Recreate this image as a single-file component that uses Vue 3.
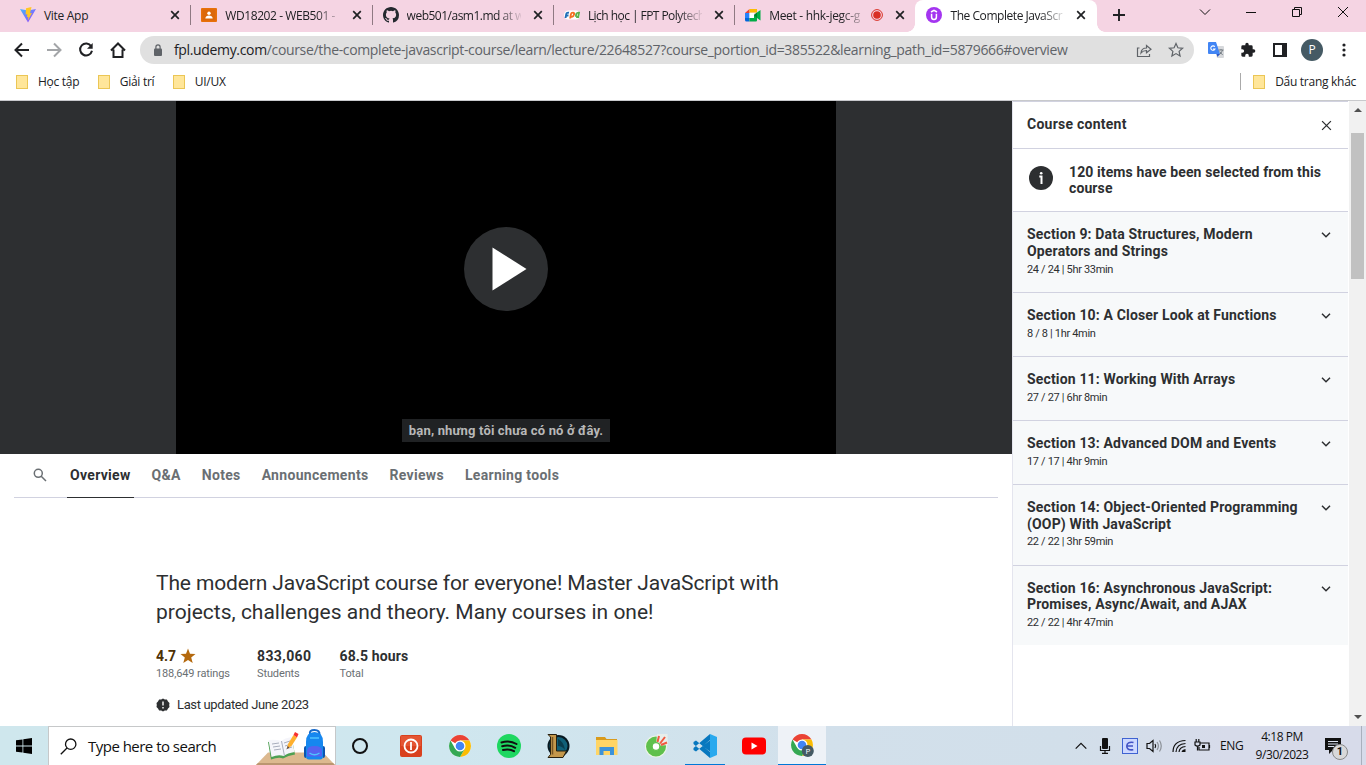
<script setup>
const tabs = [
  { id: 'vite', title: 'Vite App' },
  { id: 'classroom', title: 'WD18202 - WEB501 -' },
  { id: 'github', title: 'web501/asm1.md at w' },
  { id: 'fpt', title: 'Lịch học | FPT Polytech' },
  { id: 'meet', title: 'Meet - hhk-jegc-g', recording: true },
  { id: 'udemy', title: 'The Complete JavaScr', active: true },
]
const bookmarks = ['Học tập', 'Giải trí', 'UI/UX']
const courseTabs = ['Overview', 'Q&A', 'Notes', 'Announcements', 'Reviews', 'Learning tools']
const sections = [
  { lines: ['Section 9: Data Structures, Modern', 'Operators and Strings'], meta: '24 / 24 | 5hr 33min' },
  { lines: ['Section 10: A Closer Look at Functions'], meta: '8 / 8 | 1hr 4min' },
  { lines: ['Section 11: Working With Arrays'], meta: '27 / 27 | 6hr 8min' },
  { lines: ['Section 13: Advanced DOM and Events'], meta: '17 / 17 | 4hr 9min' },
  { lines: ['Section 14: Object-Oriented Programming', '(OOP) With JavaScript'], meta: '22 / 22 | 3hr 59min' },
  { lines: ['Section 16: Asynchronous JavaScript:', 'Promises, Async/Await, and AJAX'], meta: '22 / 22 | 4hr 47min' },
]
const apps = ['power', 'chrome', 'spotify', 'lol', 'explorer', 'coccoc', 'vscode', 'youtube', 'chromep']
</script>

<template>
  <div class="screen">
    <header class="tabstrip">
      <div v-for="t in tabs" :key="t.id" class="tab" :class="[t.id, { active: t.active }]">
        <svg class="fav" viewBox="0 0 16 16">
          <g v-if="t.id === 'vite'">
            <defs>
              <linearGradient id="vg" x1="0" y1="0" x2="1" y2="1"><stop offset="0" stop-color="#41b8ff" /><stop offset="1" stop-color="#a43cff" /></linearGradient>
            </defs>
            <path d="M0 2 8 15.500 16 2 8 3.500z" fill="url(#vg)" />
            <path d="M11.500 0 6 1.200 5.600 7.500l1.800-.3-.5 3 1.500-.4-.7 4L12 5.900l-2 .3z" fill="#ffc823" />
          </g>
          <g v-else-if="t.id === 'classroom'">
            <rect y="1" width="16" height="14" rx="1" fill="#e8710a" />
            <rect x="1.500" y="2.500" width="13" height="11" fill="#dc680a" />
            <circle cx="8" cy="6.300" r="1.700" fill="#fff" /><path d="M4.300 11.500c0-4 7.400-4 7.400 0z" fill="#fff" />
          </g>
          <path v-else-if="t.id === 'github'" fill="#24292f" d="M8 0C3.580 0 0 3.580 0 8c0 3.540 2.290 6.530 5.470 7.590.4.070.55-.17.55-.38 0-.19-.01-.82-.01-1.490-2.010.37-2.530-.49-2.690-.94-.09-.23-.48-.94-.82-1.130-.28-.15-.68-.52-.01-.53.63-.01 1.080.58 1.230.82.72 1.210 1.870.87 2.330.66.07-.52.28-.87.51-1.070-1.780-.2-3.640-.89-3.640-3.950 0-.87.31-1.590.82-2.150-.08-.2-.36-1.020.08-2.120 0 0 .67-.21 2.200.82a7.400 7.400 0 0 1 4 0c1.530-1.040 2.200-.82 2.200-.82.44 1.100.16 1.920.08 2.120.51.56.82 1.270.82 2.150 0 3.070-1.870 3.750-3.650 3.950.29.25.54.73.54 1.480 0 1.070-.01 1.930-.01 2.200 0 .21.15.46.55.38A8.010 8.010 0 0 0 16 8c0-4.420-3.580-8-8-8z" />
          <g v-else-if="t.id === 'fpt'">
            <rect x="0" y="3.500" width="16" height="9" rx="4.500" fill="#fff" />
            <g fill="none" stroke-width="1.900" transform="skewX(-10) translate(1 0)"><path d="M2.500 11V7q0-1.500 2.500-1.200M2 8.500h3" stroke="#1f6fb8" /><path d="M7.200 11.500V7q0-1.400 1.600-1.400t1.600 2-2.200 2.400" stroke="#f36f21" /><path d="M12.500 9.800V7q0-1.400 2.500-1.200v4.200h-2" stroke="#5bb04c" /></g>
          </g>
          <g v-else-if="t.id === 'meet'">
            <path d="M0 6 4.500 2v4z" fill="#ea4335" /><path d="M4.500 2H12v3.500H4.500z" fill="#fbbc04" /><path d="M0 6h4.500v5H0z" fill="#2684fc" /><path d="M0 11h4.500v3.500h-3Q0 14.500 0 13z" fill="#0066da" /><path d="M4.500 11H9V8l3-2.500 3.500-2.500v10.500L12 11v2.500q0 1-1 1H4.500z" fill="#00ac47" /><path d="M9 8l3-2.500V11z" fill="#00832d" /><path d="M4.500 6H9v5H4.500z" fill="#fff" />
          </g>
          <g v-else>
            <circle cx="8" cy="8" r="8" fill="#a435f0" />
            <path d="M5 5 8 3.300 11 5M5.600 6.800v3.200q0 2.500 2.400 2.500t2.400-2.500V6.800" fill="none" stroke="#fff" stroke-width="1.500" />
          </g>
        </svg>
        <span class="tab-title">{{ t.title }}</span>
        <svg v-if="t.recording" class="rec" viewBox="0 0 12 12"><circle cx="6" cy="6" r="5.400" fill="none" stroke="#d93025" /><circle cx="6" cy="6" r="3.800" fill="#d93025" /></svg>
        <svg class="close" viewBox="0 0 10 10"><path d="M1.200 1.200 8.800 8.800M8.800 1.200 1.200 8.800" stroke="#202124" stroke-width="1.700" /></svg>
      </div>
      <svg class="plus" viewBox="0 0 12 12"><path d="M6 0v12M0 6h12" stroke="#202124" stroke-width="1.900" /></svg>
      <div class="win">
        <svg viewBox="0 0 12 12"><path d="M1 3.500 6 8.500 11 3.500" /></svg>
        <svg viewBox="0 0 12 12"><path d="M1 6.500h10" /></svg>
        <svg viewBox="0 0 12 12"><path d="M1.500 3.500h7v7h-7zM3.500 3.500v-2h7v7h-2" /></svg>
        <svg viewBox="0 0 12 12"><path d="M1 1l10 10M11 1 1 11" /></svg>
      </div>
    </header>

    <div class="toolbar">
      <div class="nav">
        <svg viewBox="0 0 16 16"><path d="M15 8H2M8 1.500 1.500 8 8 14.500" stroke="#202124" /></svg>
        <svg viewBox="0 0 16 16"><path d="M1 8h13M8 1.500 14.500 8 8 14.500" stroke="#a3a5a8" /></svg>
        <svg viewBox="0 0 16 16"><path d="M13.200 4.200A6 6 0 1 0 14 8.800" stroke="#202124" /><path d="M14.700 1v5.700H9z" fill="#202124" /></svg>
        <svg viewBox="0 0 16 16"><path d="M1 8.500 8 1.500l7 7M3.500 7.500V15h9V7.500" stroke="#202124" /></svg>
      </div>
      <div class="omnibox">
        <svg class="lock" viewBox="0 0 10 12"><rect x="1" y="4.500" width="8" height="7.500" rx="1" fill="#5f6368" /><path d="M2.900 5V3a2.100 2.100 0 0 1 4.200 0v2" fill="none" stroke="#5f6368" stroke-width="1.200" /></svg>
        <span class="url"><b>fpl.udemy.com</b>/course/the-complete-javascript-course/learn/lecture/22648527?course_portion_id=385522&amp;learning_path_id=5879666#overview</span>
        <svg class="oi share" viewBox="0 0 16 16"><path d="M3.500 6H1.500v8.500h12V12M5 11c.3-3.500 2.500-5 5.500-5V3.500L15 7.300l-4.500 3.500V8.500Q7 8.500 5 11z" /></svg>
        <svg class="oi" viewBox="0 0 16 16"><path d="m8 1.500 1.900 4.300 4.700.5-3.500 3.100 1 4.600L8 11.600 3.900 14l1-4.600L1.400 6.300l4.700-.5z" /></svg>
      </div>
      <svg class="translate" viewBox="0 0 16 16"><path d="M6 4h9q1 0 1 1v10q0 1-1 1H9z" fill="#d6d8db" /><path d="M1 0h7l4 12H1q-1 0-1-1V1Q0 0 1 0z" fill="#4285f4" /><path d="M8.500 12H12l-2.500 3z" fill="#2a56c6" /><path d="M6.800 4.800A2.200 2.200 0 1 0 7 7H5" fill="none" stroke="#fff" stroke-width="1.100" /><path d="M10.500 8h5M13 7v1m1.500 0q-.7 3-3 4.500m.2-3q1 2 3 3.200" fill="none" stroke="#6b747c" stroke-width=".9" /></svg>
      <svg class="puzzle" viewBox="0 0 24 24"><path fill="#202124" d="M20.500 11H19V7a2 2 0 0 0-2-2h-4V3.500a2.500 2.500 0 0 0-5 0V5H4a2 2 0 0 0-2 2v3.800h1.500a2.700 2.700 0 0 1 0 5.400H2V20c0 1.100.9 2 2 2h3.800v-1.500a2.700 2.700 0 0 1 5.400 0V22H17a2 2 0 0 0 2-2v-4h1.500a2.500 2.500 0 0 0 0-5z" /></svg>
      <svg class="panel" viewBox="0 0 14 14"><path d="M0 0h14v14H0zM2 2v10h7V2z" fill="#202124" fill-rule="evenodd" /></svg>
      <span class="profile">P</span>
      <svg class="dots" viewBox="0 0 4 14"><g fill="#202124"><circle cx="2" cy="2" r="1.600" /><circle cx="2" cy="7" r="1.600" /><circle cx="2" cy="12" r="1.600" /></g></svg>
    </div>

    <div class="bookmarks">
      <span v-for="b in bookmarks" :key="b" class="bm"><i class="folder"></i>{{ b }}</span>
      <span class="bm other"><i class="folder"></i>Dấu trang khác</span>
    </div>

    <div class="page">
      <main>
        <div class="video">
          <div class="stage">
            <div class="play"><svg viewBox="0 0 84 84"><path d="M28.500 20.500v43L62.500 42z" fill="#fff" /></svg></div>
            <div class="caption">bạn, nhưng tôi chưa có nó ở đây.</div>
          </div>
        </div>
        <nav class="ctabs">
          <svg class="search" viewBox="0 0 14 14"><circle cx="5.300" cy="5.300" r="4" /><path d="m8.200 8.200 4.800 4.800" /></svg>
          <span v-for="(c, i) in courseTabs" :key="c" :class="['ctab', { on: i === 0 }]">{{ c }}</span>
        </nav>
        <section class="about">
          <h1><span class="lead">The modern JavaScript course for everyone! Master JavaScript with</span><br />projects, challenges and theory. Many courses in one!</h1>
          <div class="stats">
            <div class="s1"><b class="rate">4.7 <svg viewBox="0 0 16 16"><path d="m8 .5 2 5.300 5.500.2-4.300 3.500 1.500 5.500L8 11.900 3.300 15l1.500-5.500L.5 6l5.500-.2z" fill="#b4690e" /></svg></b><small>188,649 ratings</small></div>
            <div class="s2"><b>833,060</b><small>Students</small></div>
            <div class="s3"><b>68.5 hours</b><small>Total</small></div>
          </div>
          <div class="updated">
            <svg viewBox="0 0 14 14"><path d="m7 .5 1.800 1 2.100.1 1.100 1.800 1.500 1.500-.3 2.100.3 2.100-1.500 1.500-1.100 1.800-2.100.1-1.800 1-1.800-1-2.100-.1L2 10.600.500 9.100.8 7 .5 4.900 2 3.400l1.100-1.800 2.100-.1z" fill="#2d2f31" /><path d="M7 3.500v4M7 9v1.500" stroke="#fff" stroke-width="1.400" /></svg>
            <span>Last updated June 2023</span>
          </div>
        </section>
      </main>

      <aside>
        <div class="side-head"><h2>Course content</h2><svg viewBox="0 0 12 12"><path d="M1.200 1.200l9.600 9.600M10.800 1.200l-9.600 9.600" /></svg></div>
        <div class="notice">
          <svg viewBox="0 0 24 24"><circle cx="12" cy="12" r="12" fill="#2d2f31" /><path d="M10.300 10.500H12.500V18" fill="none" stroke="#fff" stroke-width="2" /><circle cx="12.200" cy="7.300" r="1.300" fill="#fff" /></svg>
          <p>120 items have been selected from this<br />course</p>
        </div>
        <div v-for="s in sections" :key="s.meta" class="sec">
          <div>
            <h3><template v-for="(l, i) in s.lines" :key="l"><br v-if="i" />{{ l }}</template></h3>
            <p>{{ s.meta }}</p>
          </div>
          <svg viewBox="0 0 10 6"><path d="M1 .8 5 4.800 9 .8" /></svg>
        </div>
      </aside>

      <div class="scroll">
        <svg viewBox="0 0 8 4"><path d="M0 4 4 0l4 4z" fill="#505050" /></svg>
        <i class="thumb"></i>
        <svg class="down" viewBox="0 0 8 4"><path d="M0 0l4 4 4-4z" fill="#505050" /></svg>
      </div>
    </div>

    <footer class="taskbar">
      <div class="start"><svg viewBox="0 0 16 16"><path d="M0 2.300 6.500 1.400V7.600H0zM7.300 1.300 16 0v7.600H7.300zM0 8.400h6.500v6.200L0 13.700zM7.300 8.400H16V16l-8.700-1.300z" /></svg></div>
      <div class="searchbox">
        <svg class="mag" viewBox="0 0 17 17"><circle cx="10.700" cy="6.200" r="5.200" /><path d="M7 10 .8 16.200" /></svg>
        <span>Type here to search</span>
        <svg class="art" viewBox="0 0 79 38">
          <path d="M12 25.500h55L79 38H0z" fill="#dcb98f" /><path d="M2 36h75l2 2H0z" fill="#bb9670" />
          <path d="m12 15 3 17.500q8-3 12-1 5-3 12-4l-3-15q-7 0-11 3-6-2-13-.5z" fill="#4da052" />
          <path d="m12.500 13 3 17q7-3 12-1 4-3 11-4l-3-15q-7 1-10 4-6-2-13-1z" fill="#f5f5fa" /><path d="m25.500 14 3 15M16 17l7-1m-6 4 7-1m-6 4 7-1m3-6 6-2m-5 5 6-2m-5 5 6-2" stroke="#a9aebd" fill="none" />
          <path d="m31 22 1-5 5.500-9 3.500 2.500L35.500 19z" fill="#ffb02e" /><path d="m37.500 8 1.500-3 3.500 2-1.500 3.500z" fill="#f8312f" /><path d="m31 22 .5-3 2 1.500z" fill="#594640" />
          <path d="M54 7Q53 3 58.500 3t5 5" fill="none" stroke="#1769c9" stroke-width="2" /><path d="M50 15q0-10 8.500-10T67 15v14.500q0 3-3 3H53q-3 0-3-3z" fill="#1687ef" /><path d="M48 21q0-2 2-2v12q-2 0-2-2zM69 21q0-2-2-2v12q2 0 2-2z" fill="#0c55b0" /><path d="M51 24q0-5 7.500-5t7.500 5v5.500H51z" fill="#5563f0" /><path d="M53.500 26q5 3.500 10 0M54 11h9" stroke="#4fc3ff" fill="none" stroke-width="1.400" />
        </svg>
      </div>
      <div class="cortana"><i></i></div>
      <div v-for="a in apps" :key="a" :class="['app', a]">
        <svg viewBox="0 0 24 24">
          <g v-if="a === 'power'"><rect x="1" y="1" width="22" height="22" rx="2" fill="#d9411e" /><rect x="2" y="2" width="20" height="10" fill="#ef6a48" opacity=".5" /><circle cx="12" cy="12" r="6.500" fill="none" stroke="#fff" stroke-width="1.800" /><path d="M12 8v8" stroke="#fff" stroke-width="1.800" /></g>
          <g v-else-if="a === 'chrome' || a === 'chromep'">
            <circle cx="12" cy="12" r="11" fill="#fff" />
            <path d="M12 12 2.500 6.500A11 11 0 0 1 21.500 6.500H12z" fill="#ea4335" /><path d="M12 12V6.500h9.500A11 11 0 0 1 12 23l4.800-8.300z" fill="#fbbc04" /><path d="M2.500 6.500A11 11 0 0 0 12 23l4.800-8.300L12 12 7.200 14.700z" fill="#34a853" />
            <circle cx="12" cy="12" r="5.500" fill="#fff" /><circle cx="12" cy="12" r="4.300" fill="#4285f4" />
            <g v-if="a === 'chromep'"><circle cx="17.800" cy="18" r="6" fill="#455a64" /><text x="15.400" y="21" font-size="8" fill="#fff">P</text></g>
          </g>
          <g v-else-if="a === 'spotify'"><circle cx="12" cy="12" r="12" fill="#1ed760" /><path d="M4.500 8.500q8-2.500 15 1.500M5.200 12.300q7-2 13 1.500M6 16q6-1.500 11 1.200" fill="none" stroke="#101010" stroke-width="2" stroke-linecap="round" /></g>
          <g v-else-if="a === 'lol'"><circle cx="12.500" cy="12" r="11" fill="#071820" /><circle cx="12.500" cy="12" r="9" fill="#116078" /><path d="M12 5q6 3 7 11-3-4-7-4z" fill="#0a3c4d" /><path d="M2 .5h8.500v16.500h10L17 23.500H2l2.500-3V3z" fill="#c4984c" stroke="#28200f" /><path d="M6.500 3v17.500" stroke="#765525" stroke-width="1.500" /></g>
          <g v-else-if="a === 'explorer'"><path d="M1 3h9l1.500 2H22v4H1z" fill="#d99b1c" /><path d="M1 6h21.500v15H1z" fill="#ffd565" /><path d="M4.500 21v-8h14.500v8h-4v-4H8.500v4z" fill="#3d93d8" /></g>
          <g v-else-if="a === 'coccoc'"><circle cx="12" cy="12.500" r="11" fill="#edf5e8" /><circle cx="12" cy="12.500" r="7" fill="none" stroke="#5fc04c" stroke-width="6" /><path d="M12 12 13 0h10.500l.5 11z" fill="#e8eeea" /><path d="m13.500 8 1.500-6M16 9.500 21 3M17 11l6-2.500" stroke="#f15a40" stroke-width="2" /><circle cx="12" cy="12.500" r="4.600" fill="#5fc04c" /><circle cx="12" cy="12.500" r="3.200" fill="#fff" /></g>
          <g v-else-if="a === 'vscode'"><path d="M17 0 24 3v18l-7 3z" fill="#29a9ee" /><path d="M17 6.500v11L9.500 12zM17 0v6L3 17.500.5 16V14zM17 24v-6L3 6.500.5 8v2z" fill="#0878bf" /></g>
          <g v-else><rect y="3.500" width="24" height="17" rx="4" fill="#f00" /><path d="M9.500 8.500v7l6-3.500z" fill="#fff" /></g>
        </svg>
      </div>
      <div class="tray">
        <svg class="t-up" viewBox="0 0 12 8"><path d="M.7 6.700 6 1.400l5.300 5.300" class="ln" /></svg>
        <svg class="t-mic" viewBox="0 0 12 16"><rect x="3" y="0" width="6" height="11" rx="1" /><path d="M1.500 8v4.500h9V8M6 12v3M3 15.400h6" class="ln" /></svg>
        <svg class="t-e" viewBox="0 0 16 16"><rect x=".5" y=".5" width="15" height="15" fill="#cdd8ff" stroke="#3f63d2" /><path d="M11.500 4.500Q5 3.500 4.800 8t6.500 3.800M5 8h6" fill="none" stroke="#4252c4" stroke-width="1.600" /></svg>
        <svg class="t-vol" viewBox="0 0 17 14"><path d="M1 4.500h2.500L7 1.500v11L3.500 9.500H1zM9 5q1.300 2 0 4" class="ln" /><path d="M11 3q2.800 4 0 8M13.500 1.500q3.500 5.500 0 11" class="ln dim" /></svg>
        <svg class="t-wifi" viewBox="0 0 14 14"><path d="M1 13Q1 2 13.500 1.500M4 13Q4.500 5 13.500 4.500M7 13q.5-5 6.500-5.500" class="ln" /><path d="M9.500 13q.5-2.500 4-3v3z" /></svg>
        <svg class="t-bat" viewBox="0 0 17 13"><path d="M6 4h9v7H5V8M15.500 6v3M1 3h5v3Q3.500 8.500 1 6zM2.200 0v3M4.800 0v3M3.500 7v4.500" class="ln" /><path d="M8 6h3v3H8z" /></svg>
        <span class="lang">ENG</span>
        <span class="clock">4:18 PM<br />9/30/2023</span>
        <div class="action"><svg viewBox="0 0 16 16"><path d="M0 0h16v12H8l-4 4v-4H0z" /><path d="M3 3.500h10M3 6h10M3 8.500h6" stroke="#dce2ef" /></svg><em>1</em></div>
        <i class="edge"></i>
      </div>
    </footer>
  </div>
</template>

<style>
body { overflow: hidden; }
</style>

<style scoped>
* { box-sizing: border-box; }
h1, h2, h3, p { margin: 0; }
svg { display: block; flex: none; overflow: visible; }
.screen { width: 1366px; height: 765px; display: flex; flex-direction: column; background: #fff; overflow: hidden; font-family: "Open Sans", "Noto Sans", sans-serif; color: #202124; }
.tabstrip { height: 32px; background: #f5d4e3; display: flex; align-items: center; padding-left: 9px; flex: none; }
.tab { position: relative; width: 181.300px; height: 32px; display: flex; align-items: center; padding: 0 10px 2px 11px; font-size: 12px; letter-spacing: -.3px; flex: none; }
.tab:not(.active):not(.meet)::after { content: ""; position: absolute; right: -1px; top: 5px; width: 1px; height: 20px; background: #8f7983; }
.fav { width: 16px; height: 16px; }
.tab-title { margin-left: 8px; flex: 1; white-space: nowrap; }
.tab:not(.vite) .tab-title { width: 0; mask-image: linear-gradient(90deg, #000 calc(100% - 24px), rgba(0, 0, 0, .1)); }
.classroom, .github, .fpt, .udemy { letter-spacing: -.42px; }
.github { letter-spacing: -.5px; }
.fpt { letter-spacing: -.55px; }
.udemy { letter-spacing: -.45px; }
.rec { width: 12px; height: 12px; margin-left: 6px; }
.close { width: 10px; height: 10px; margin-left: 12px; }
.tab.active { background: #fff; border-radius: 8px 8px 0 0; padding-right: 11px; }
.tab.active::before, .tab.active::after { content: ""; position: absolute; bottom: 0; width: 8px; height: 8px; }
.tab.active::before { left: -8px; background: radial-gradient(circle at 0 0, #f5d4e3 7.500px, #fff 8px); }
.tab.active::after { right: -8px; background: radial-gradient(circle at 100% 0, #f5d4e3 7.500px, #fff 8px); }
.plus { width: 12px; height: 12px; margin: 0 0 2px 16px; }
.win { margin: 0 17px 8px auto; display: flex; gap: 34px; }
.win svg { width: 12px; height: 12px; fill: none; stroke: #111; }
.toolbar { height: 36px; flex: none; display: flex; align-items: center; }
.nav { display: flex; gap: 16px; padding-left: 14px; width: 140px; }
.nav svg { width: 16px; height: 16px; fill: none; stroke-width: 2; }
.omnibox { width: 1054px; height: 28px; border-radius: 14px; background: #e0e0e0; display: flex; align-items: center; padding: 0 10px 0 13px; }
.lock { width: 10px; height: 12px; }
.url { margin: 0 0 1px 11px; font-size: 14px; letter-spacing: -.345px; color: #5f6368; white-space: nowrap; flex: 1; }
.url b { font-weight: 400; color: #202124; }
.oi { width: 16px; height: 16px; fill: none; stroke: #5f6368; stroke-width: 1.200; }
.share { margin-right: 16px; }
.translate { width: 16px; height: 16px; margin-left: 14px; }
.puzzle { width: 16px; height: 16px; margin-left: 16px; }
.panel { width: 14px; height: 14px; margin-left: 17px; }
.profile { width: 22px; height: 22px; margin-left: 14px; border-radius: 50%; background: #455a64; color: #fff; text-align: center; font-size: 12px; line-height: 22px; }
.dots { width: 4px; height: 14px; margin-left: 19px; }
.bookmarks { height: 32px; flex: none; display: flex; align-items: center; padding: 0 10px 5px 16px; font-size: 12px; letter-spacing: -.28px; }
.bm { display: flex; align-items: center; margin-right: 18.500px; }
.folder { width: 12px; height: 14px; background: #ffe69a; border: 1px solid #ebc655; margin-right: 10px; }
.other { margin: 0 0 0 auto; border-left: 1px solid #aaa; padding-left: 12px; }
.page { height: 626px; flex: none; display: flex; border-top: 1px solid #c8c9cc; font-family: Roboto, sans-serif; color: #2d2f31; }
main { width: 1012px; }
.video { height: 353px; background: #2d2f31; display: flex; justify-content: center; }
.stage { width: 660px; background: #000; display: flex; flex-direction: column; align-items: center; }
.play { margin-top: 126px; width: 84px; height: 84px; border-radius: 50%; background: #2d2f31; }
.caption { margin-top: 108px; width: 208px; height: 23px; background: #202224; color: #b8b8b8; font: 700 13px/23px Roboto, sans-serif; letter-spacing: .16px; text-align: center; white-space: nowrap; }
.ctabs { margin: 0 14px; height: 44px; border-bottom: 1px solid #d1d2e0; display: flex; align-items: stretch; color: #6a6f73; font-weight: 700; font-size: 14px; line-height: 43px; letter-spacing: .31px; gap: 15px; }
.search { width: 14px; height: 14px; margin: 14px 5px 0 19px; fill: none; stroke: #6a6f73; stroke-width: 1.500; }
.ctab { padding: 0 3px; height: 44px; white-space: nowrap; }
.ctab.on { color: #2d2f31; border-bottom: 1px solid #2d2f31; }
.about { padding: 71px 0 0 156px; }
h1 { font-size: 21px; font-weight: 400; line-height: 29px; white-space: nowrap; }
.lead { letter-spacing: -.125px; }
.stats { display: flex; margin-top: 21px; }
.stats b { display: flex; font-size: 14px; line-height: 17px; }
.stats small { display: block; font-size: 11px; line-height: 17px; letter-spacing: -.12px; color: #6a6f73; }
.s1 { width: 101px; }
.s2 { width: 82.500px; }
.s2 b { letter-spacing: .4px; }
.s3 b { letter-spacing: .12px; }
.rate { color: #4d3105; gap: 4px; }
.rate svg { width: 16px; height: 16px; }
.updated { display: flex; align-items: center; gap: 7px; margin-top: 14px; font-size: 13px; line-height: 18px; letter-spacing: -.36px; }
.updated svg { width: 14px; height: 14px; }
aside { width: 336px; border-left: 1px solid #e4e5ee; }
.side-head { height: 48px; border-top: 1px solid #d1d2e0; border-bottom: 1px solid #d1d2e0; display: flex; align-items: center; padding: 0 16px 0 14px; }
h2 { flex: 1; font-size: 14px; letter-spacing: .25px; padding-bottom: 2px; }
.side-head svg { width: 11px; height: 11px; fill: none; stroke: #2d2f31; stroke-width: 1.400; }
.notice { height: 63px; border-bottom: 1px solid #d1d2e0; display: flex; align-items: center; padding-left: 16px; }
.notice svg { width: 24px; height: 24px; margin-bottom: 5px; }
.notice p { margin-left: 16px; font-weight: 700; font-size: 14px; line-height: 16px; letter-spacing: .11px; white-space: nowrap; }
.sec { background: #f7f9fa; padding: 14px 17px 0 14px; border-bottom: 1px solid #d1d2e0; display: flex; justify-content: space-between; }
.sec:last-child { border: 0; }
h3 { font-size: 14px; line-height: 16.800px; letter-spacing: .16px; white-space: nowrap; }
.sec p { font-size: 11px; line-height: 16px; letter-spacing: -.33px; padding: 2px 0 14.200px; }
.sec svg { width: 10px; height: 6px; margin-top: 6px; fill: none; stroke: #2d2f31; stroke-width: 1.500; }
.scroll { width: 17px; margin-left: 1px; background: #f1f1f1; display: flex; flex-direction: column; align-items: center; padding: 7px 0 7px; }
.scroll svg { width: 8px; height: 4px; }
.thumb { width: 13px; height: 146px; margin-top: 21px; background: #c1c1c1; }
.scroll .down { margin-top: auto; }
.taskbar { height: 39px; flex: none; display: flex; background: linear-gradient(90deg, #cfe7ed 0, #cfe7ef 32%, #d2e0eb 60%, #d2dfea 78%, #d7dbea 90%); font-family: "Open Sans", "Noto Sans", sans-serif; color: #111; }
.start { width: 48px; display: grid; place-items: center; }
.start svg { width: 16px; height: 16px; }
.searchbox { width: 288px; border: 1px solid #c6c8c9; border-bottom: 0; background: #fff; display: flex; align-items: center; padding-left: 11px; font-size: 15px; letter-spacing: -.52px; }
.searchbox span { margin-left: 11px; white-space: nowrap; }
.mag { width: 17px; height: 17px; fill: none; stroke: #111; stroke-width: 1.300; }
.art { width: 79px; height: 38px; margin-left: auto; }
.cortana { width: 50px; padding-right: 2px; display: grid; place-items: center; }
.cortana i { width: 16px; height: 16px; border: 2.500px solid #111; border-radius: 50%; }
.app { width: 49px; display: grid; place-items: center; }
.app svg { width: 24px; height: 24px; }
.app.vscode { background: linear-gradient(#0078d7, #0078d7) 50% 100% / 40px 1px no-repeat; }
.app.chromep { background: #eef2f7; border-bottom: 1px solid #0078d7; width: 48px; }
.tray { flex: 1; display: flex; align-items: center; }
.tray svg { fill: #111; }
.tray .ln { fill: none; stroke: #111; stroke-width: 1.200; }
.tray .dim { stroke: #8b9097; }
.t-up { width: 12px; height: 8px; margin-left: 249px; }
.t-mic { width: 12px; height: 16px; margin-left: 12px; }
.t-e { width: 16px; height: 16px; margin-left: 11px; }
.t-vol { width: 17px; height: 14px; margin-left: 8px; }
.t-wifi { width: 14px; height: 14px; margin-left: 9px; }
.t-bat { width: 17px; height: 13px; margin-left: 8px; }
.lang { font-size: 12px; letter-spacing: -.4px; width: 25px; margin-left: 9px; }
.clock { width: 60px; margin-left: 7px; text-align: center; font-size: 12px; line-height: 18px; letter-spacing: -.45px; white-space: nowrap; }
.action { position: relative; margin-left: 13px; }
.action svg { width: 16px; height: 16px; }
.action em { position: absolute; left: 7px; top: 6px; width: 16px; height: 16px; border-radius: 50%; border: 1px solid #888; background: #d8d8da; font: 700 11px/14px Roboto, sans-serif; text-align: center; }
.edge { align-self: stretch; width: 1px; background: #a9b0bd; margin-left: auto; margin-right: 4px; }
</style>
